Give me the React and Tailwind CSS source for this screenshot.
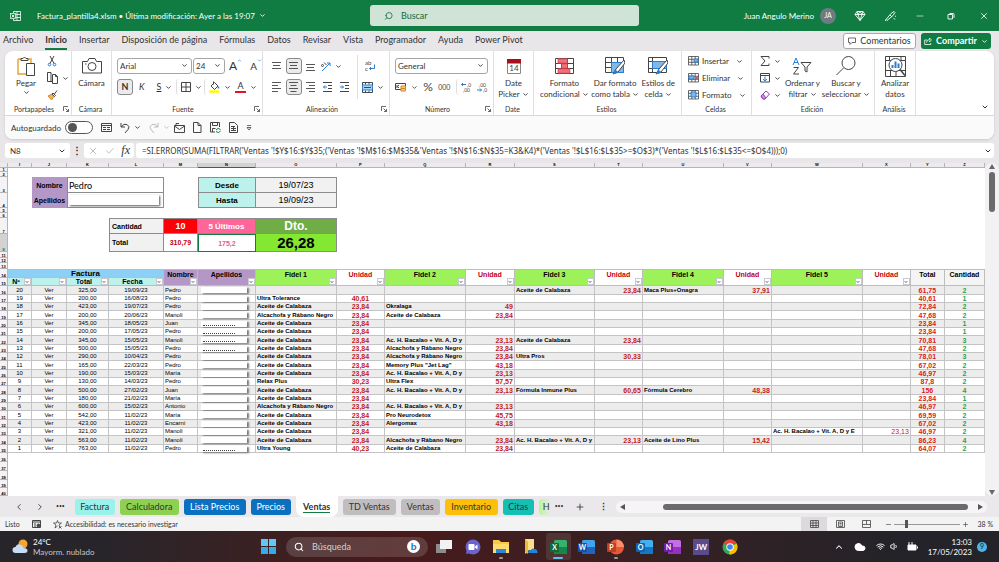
import { useState } from 'react';
import { ChevronDown, ChevronLeft, ChevronRight, ChevronUp, Cloud, Minus, Plus, Search, Volume1, Wifi, X, Check } from 'lucide-react';

const COLS = [
  ['', 8], ['I', 24], ['J', 35], ['K', 42], ['L', 55], ['M', 34], ['N', 58], ['O', 81], ['P', 48], ['Q', 81],
  ['R', 49], ['S', 80], ['T', 48], ['U', 81], ['V', 48], ['W', 91], ['X', 48], ['Y', 34], ['Z', 40],
];
const TOTAL_WIDTH = 985;

const CAL = 'Aceite de Calabaza';
const BAC = 'Ac. H. Bacalao + Vit. A, D y';
const ALC = 'Alcachofa y Rábano Negro';

// number, total, date, name, five product/price pairs, grand total, quantity
const SALES = [
  [20, '325,00', '19/09/23', 'Pedro', [['', ''], ['', ''], [CAL, '23,84'], ['Maca Plus+Onagra', '37,91'], ['', '']], '61,75', 2],
  [19, '200,00', '16/08/23', 'Pedro', [['Ultra Tolerance', '40,61'], ['', ''], ['', ''], ['', ''], ['', '']], '40,61', 1],
  [18, '423,00', '19/07/23', 'Pedro', [[CAL, '23,84'], ['Okralaga', '49'], ['', ''], ['', ''], ['', '']], '72,84', 2],
  [17, '200,00', '20/06/23', 'Manoli', [[ALC, '23,84'], [CAL, '23,84'], ['', ''], ['', ''], ['', '']], '47,68', 2],
  [16, '345,00', '18/05/23', 'Juan', [[CAL, '23,84'], ['', ''], ['', ''], ['', ''], ['', '']], '23,84', 1],
  [15, '200,00', '17/05/23', 'Pedro', [[CAL, '23,84'], ['', ''], ['', ''], ['', ''], ['', '']], '23,84', 1],
  [14, '345,00', '15/05/23', 'Manoli', [[CAL, '23,84'], [BAC, '23,13'], [CAL, '23,84'], ['', ''], ['', '']], '70,81', 3],
  [13, '500,00', '15/05/23', 'Pedro', [[CAL, '23,84'], [ALC, '23,84'], ['', ''], ['', ''], ['', '']], '47,68', 2],
  [12, '290,00', '10/04/23', 'Pedro', [[CAL, '23,84'], [ALC, '23,84'], ['Ultra Pros', '30,33'], ['', ''], ['', '']], '78,01', 3],
  [11, '165,00', '22/03/23', 'Pedro', [[CAL, '23,84'], ['Memory Plus "Jet Lag"', '43,18'], ['', ''], ['', ''], ['', '']], '67,02', 2],
  [10, '190,00', '15/03/23', 'María', [[CAL, '23,84'], [BAC, '23,13'], ['', ''], ['', ''], ['', '']], '46,97', 2],
  [9, '130,00', '14/03/23', 'Pedro', [['Relax Plus', '30,23'], ['Ultra Flex', '57,57'], ['', ''], ['', ''], ['', '']], '87,8', 2],
  [8, '500,00', '27/02/23', 'Juan', [[CAL, '23,84'], [BAC, '23,13'], ['Fórmula Inmune Plus', '60,65'], ['Fórmula Cerebro', '48,38'], ['', '']], '156', 4],
  [7, '180,00', '21/02/23', 'María', [[CAL, '23,84'], ['', ''], ['', ''], ['', ''], ['', '']], '23,84', 1],
  [6, '600,00', '15/02/23', 'Antonio', [[ALC, '23,84'], [BAC, '23,13'], ['', ''], ['', ''], ['', '']], '46,97', 2],
  [5, '542,00', '11/02/23', 'María', [[CAL, '23,84'], ['Pro Neurodetox', '45,75'], ['', ''], ['', ''], ['', '']], '69,59', 2],
  [4, '423,00', '11/02/23', 'Encarni', [[CAL, '23,84'], ['Alergomax', '43,18'], ['', ''], ['', ''], ['', '']], '67,02', 2],
  [3, '321,00', '11/02/23', 'Manoli', [[CAL, '23,84'], ['', ''], ['', ''], ['', ''], ['Ac. H. Bacalao + Vit. A, D y E', '23,13']], '46,97', 2],
  [2, '563,00', '11/02/23', 'Manoli', [[CAL, '23,84'], [ALC, '23,84'], [BAC, '23,13'], ['Aceite de Lino Plus', '15,42'], ['', '']], '86,23', 4],
  [1, '763,00', '11/02/23', 'Pedro', [['Ultra Young', '40,23'], [CAL, '23,84'], ['', ''], ['', ''], ['', '']], '64,07', 2],
];

// rows where a line of the covered surname still shows
const SHOWS_SURNAME = [16, 15, 14, 13, 1];

const TABS = [
  ['Factura', 'w-10 bg-[#99f3ea]'],
  ['Calculadora', 'w-[59px] bg-[#8ed152]'],
  ['Lista Precios', 'w-[62px] bg-[#0c70c0] text-white'],
  ['Precios', 'w-10 bg-[#0c70c0] text-white'],
  ['Ventas', ''],
  ['TD Ventas', 'w-[53px] bg-[#bfbdbf]'],
  ['Ventas', 'w-[39px] bg-[#bfbdbf]'],
  ['Inventario', 'w-[53px] bg-[#fdbf0a]'],
  ['Citas', 'w-[31px] bg-[#15bfb4]'],
];

function Icon({ w, h, children, className = '' }) {
  return (
    <svg width={w} height={h} viewBox={`0 0 ${w} ${h}`} fill="none" stroke="#444" strokeWidth="1" className={`shrink-0 ${className}`} aria-hidden="true">
      {children}
    </svg>
  );
}

const Down = ({ className = '' }) => <ChevronDown className={`size-[7px] shrink-0 ${className}`} strokeWidth={3} />;

function IconButton({ label, active, drop, className = '', children }) {
  return (
    <button
      aria-label={label}
      className={`flex h-4 items-center justify-center gap-1 rounded-[3px] ${active ? 'w-4 border border-[#8a8a8a] bg-[#ebebeb]' : ''} ${className}`}
    >
      {children}
      {drop && <Down />}
    </button>
  );
}

function Group({ label, launcher, className = '', children }) {
  return (
    <section aria-label={label} className={`flex shrink-0 flex-col border-r border-[#e1dfe1] ${className}`}>
      <div className="flex flex-1">{children}</div>
      <div className="flex h-3 items-center pr-0.5 text-[7px] leading-3">
        <span className="flex-1 text-center">{label}</span>
        {launcher && (
          <button aria-label={`Opciones de ${label}`}>
            <Icon w={6} h={6}><path d="M.5 5V.5H5M2.500 2.500l3 3M5.500 3v2.500H3" strokeWidth=".8" /></Icon>
          </button>
        )}
      </div>
    </section>
  );
}

function BigButton({ icon, lines, drop, className = '' }) {
  return (
    <button className={`flex flex-col items-center text-[8px] leading-[11px] ${className}`}>
      <span className="flex h-6 items-center justify-center">{icon}</span>
      {lines.map((line, i) => (
        <span key={line} className="flex items-center gap-0.5 whitespace-nowrap">
          {line}
          {drop && i === lines.length - 1 && <Down />}
        </span>
      ))}
    </button>
  );
}

function Dropdown({ label, value, className = '' }) {
  return (
    <div className={`relative ${className}`}>
      <select aria-label={label} className="block h-4 w-full appearance-none rounded-[3px] border border-[#a5a5a5] bg-white pl-0.5 text-[8px] leading-3">
        <option>{value}</option>
      </select>
      <Down className="pointer-events-none absolute right-1 top-1" />
    </div>
  );
}

const Lines = ({ d }) => <Icon w={10} h={10}><path d={d} strokeWidth=".9" /></Icon>;

function TitleBar() {
  return (
    <header className="flex h-[31px] items-center bg-[#107c41] text-[8px] text-white">
      <div className="flex flex-1 items-center gap-4 pl-2.5">
        <Icon w={11} h={12}>
          <g stroke="#fff">
            <path d="M3.500 3V1.500H10.500V10.500H3.500V9M7 1.500V10.500M3.500 4.500H10.500M3.500 7.500H10.500" strokeWidth=".8" />
            <rect x=".5" y="3.500" width="5" height="5" fill="#107c41" strokeWidth=".7" />
            <path d="M1.800 4.600l2.400 2.800M4.200 4.600L1.800 7.400" strokeWidth=".9" />
          </g>
        </Icon>
        <button className="flex items-center gap-1 whitespace-nowrap">
          Factura_plantilla4.xlsm • Última modificación: Ayer a las 19:07
          <Down />
        </button>
      </div>
      <label className="flex h-[21px] w-[27%] items-center gap-2 rounded-[3px] bg-[#cfe3d7] px-3.5 text-[#176b3c]">
        <Search className="size-2.5 -scale-x-100" strokeWidth={2} />
        <input type="search" aria-label="Buscar" placeholder="Buscar" className="w-full bg-transparent text-[9px] outline-none placeholder:text-[#176b3c]" />
      </label>
      <div className="flex flex-1 items-center justify-end">
        <span>Juan Angulo Merino</span>
        <span className="ml-1.5 flex size-4 items-center justify-center rounded-full bg-[#6e7b80] text-[7px]">JA</span>
        <button aria-label="Premium" className="ml-[18px]">
          <Icon w={12} h={12}><path d="M3 1.500h6l2 3-5 6-5-6zM1 4.500h10M4 4.500l2 6 2-6M3 1.500l1 3 2-3 2 3 1-3" stroke="#fff" strokeWidth=".9" /></Icon>
        </button>
        <button aria-label="Novedades" className="ml-[18px]">
          <Icon w={13} h={12}><path d="M2 9.500l5-6 3-2 1 1-2 3-6 5zM1 11l1.500-1.500M6 5l2 2M11 6l1 .5M9.500 8l1.500 1.500" stroke="#fff" strokeWidth=".9" /></Icon>
        </button>
        <button aria-label="Minimizar" className="ml-[18px]"><Minus className="size-2.5" strokeWidth={1.500} /></button>
        <button aria-label="Restaurar" className="ml-[22px]">
          <Icon w={8} h={8}><path d="M2.500 1.500h3.500q1 0 1 1V6M1 2.500h4.500V7H1z" stroke="#fff" strokeWidth=".9" /></Icon>
        </button>
        <button aria-label="Cerrar" className="ml-6 mr-2.5"><X className="size-2.5" strokeWidth={2} /></button>
      </div>
    </header>
  );
}

function MenuBar() {
  const menus = ['Archivo', 'Inicio', 'Insertar', 'Disposición de página', 'Fórmulas', 'Datos', 'Revisar', 'Vista', 'Programador', 'Ayuda', 'Power Pivot'];
  return (
    <nav className="flex h-5 items-center justify-between pl-[3px] pr-2 text-[9px]">
      <div className="flex gap-3">
        {menus.map((m) => (
          <button key={m} className={`whitespace-nowrap leading-4 ${m === 'Inicio' ? 'border-b-2 border-[#107c41] font-bold' : 'border-b-2 border-transparent'}`}>{m}</button>
        ))}
      </div>
      <div className="flex items-center gap-[5px]">
        <button className="flex h-4 w-[73px] items-center justify-center gap-1 rounded-[3px] border border-[#a9a9a9] bg-white">
          <Icon w={8} h={8}><path d="M.5 1h7v4.500H4l-2 2v-2H.5z" strokeWidth=".8" /></Icon>
          Comentarios
        </button>
        <button className="flex h-4 w-[70px] items-center justify-center gap-1 rounded-[3px] bg-[#107c41] font-bold text-white">
          <Icon w={8} h={8}><path d="M3 3H.7v4.500h6V6M2.500 5.500q.5-3 3-3V1l2 2-2 2V3.700" stroke="#fff" strokeWidth=".8" /></Icon>
          Compartir
          <Down />
        </button>
      </div>
    </nav>
  );
}

function Clipboard() {
  return (
    <Group label="Portapapeles" launcher className="w-[67px]">
      <button className="flex w-[42px] flex-col items-center pt-[5px] text-[8px] leading-[11px]">
        <Icon w={18} h={22}>
          <path d="M1 3h13v4M1 3v15h8" stroke="#e8a33d" strokeWidth="1.500" />
          <path d="M4 4.500V2.500h2q1.500-3 3 0h2v2z" fill="#fff" />
          <path d="M9.500 7.500h8v12h-8z" fill="#fff" />
        </Icon>
        <span>Pegar</span>
        <Down />
      </button>
      <div className="flex flex-col items-start gap-px pt-0.5">
        <IconButton label="Cortar">
          <Icon w={10} h={12}><path d="M3 1l4 7.500M7 1L3 8.500" /><circle cx="2.500" cy="9.500" r="1.300" stroke="#2b7cd3" /><circle cx="7.500" cy="9.500" r="1.300" stroke="#2b7cd3" /></Icon>
        </IconButton>
        <IconButton label="Copiar" drop>
          <Icon w={11} h={12}><path d="M5 9.500H.5v-9H4v9M5.500 2.500h3l2 2v7h-5zM8.500 2.500v2h2" /></Icon>
        </IconButton>
        <IconButton label="Copiar formato">
          <Icon w={11} h={12}><path d="M1 7l4-2 2 2.500L4.500 11z" fill="#f2b35b" stroke="#d68a20" /><path d="M5 5l2.500 2.500 1-1L6 4zM7.500 5L10 1.500" /></Icon>
        </IconButton>
      </div>
    </Group>
  );
}

function FontGroup() {
  return (
    <Group label="Fuente" launcher className="w-[151px]">
      <div className="flex flex-col gap-[5px] px-[5px] pt-[7px]">
        <div className="flex items-center">
          <Dropdown label="Fuente" value="Arial" className="w-[75px]" />
          <Dropdown label="Tamaño" value="24" className="ml-px w-8" />
          <button aria-label="Aumentar tamaño" className="ml-1 flex text-[12px] leading-4">A<ChevronUp className="size-[5px] text-[#2b7cd3]" strokeWidth={3} /></button>
          <button aria-label="Reducir tamaño" className="ml-2 flex text-[10px] leading-4">A<ChevronDown className="size-[5px] text-[#2b7cd3]" strokeWidth={3} /></button>
        </div>
        <div className="flex items-center text-[9px]">
          <IconButton label="Negrita" active><b>N</b></IconButton>
          <IconButton label="Cursiva" className="ml-1.5"><i>K</i></IconButton>
          <IconButton label="Subrayado" drop className="ml-3"><u>S</u></IconButton>
          <IconButton label="Bordes" drop className="ml-1 border-l border-[#e1dfe1] pl-1">
            <Icon w={10} h={10}><path d="M.5.5h9v9h-9zM5 .5v9M.5 5h9" /></Icon>
          </IconButton>
          <IconButton label="Color de relleno" drop className="ml-0.5 border-l border-[#e1dfe1] pl-1">
            <Icon w={11} h={12}><path d="M2 5l3.500-3.500L9 5 5.500 8.500zM4.500.5v3" /><path d="M9.500 5.500v2" stroke="#2b7cd3" strokeWidth="1.500" /><path d="M0 10.500h10" stroke="#ff0" strokeWidth="2.500" /></Icon>
          </IconButton>
          <IconButton label="Color de fuente" drop className="ml-1">
            <span className="border-b-2 border-[#e81123] px-0.5 leading-[10px]">A</span>
          </IconButton>
        </div>
      </div>
    </Group>
  );
}

function AlignGroup() {
  return (
    <Group label="Alineación" launcher className="w-[127px]">
      <div className="flex flex-col gap-[5px] pl-1.5 pt-[7px]">
        <div className="flex items-center gap-px">
          <IconButton label="Alinear arriba" className="w-4"><Lines d="M0 1.500h9M1 4.500h7M0 7.500h9" /></IconButton>
          <IconButton label="Alinear en el medio" active><Lines d="M0 1.500h9M1 4.500h7M0 7.500h9" /></IconButton>
          <IconButton label="Alinear abajo" className="w-4"><Lines d="M0 3.500h9M1 6.500h7M0 9.500h9" /></IconButton>
          <IconButton label="Orientación" drop>
            <Icon w={11} h={11}><path d="M2 10l8-8M10 5V2H7" stroke="#2b7cd3" /><path d="M1.500 4.500a1 1 0 102 0 1 1 0 10-2 0M4 1.500l2.500 2.500" /></Icon>
          </IconButton>
        </div>
        <div className="flex items-center gap-px">
          <IconButton label="Alinear a la izquierda" className="w-4"><Lines d="M0 .5h9M0 3.500h6M0 6.500h9M0 9.500h6" /></IconButton>
          <IconButton label="Centrar" active><Lines d="M0 .5h9M1.500 3.500h6M0 6.500h9M1.500 9.500h6" /></IconButton>
          <IconButton label="Alinear a la derecha" className="w-4"><Lines d="M0 .5h9M3 3.500h6M0 6.500h9M3 9.500h6" /></IconButton>
          <IconButton label="Disminuir sangría" className="w-4"><Icon w={10} h={10}><path d="M0 .5h9M5 3.500h4M5 6.500h4M0 9.500h9" /><path d="M4 5H.5M2 3.500L.5 5 2 6.500" stroke="#2b7cd3" /></Icon></IconButton>
          <IconButton label="Aumentar sangría" className="w-4"><Icon w={10} h={10}><path d="M0 .5h9M5 3.500h4M5 6.500h4M0 9.500h9" /><path d="M0 5h3.500M2 3.500L3.500 5 2 6.500" stroke="#2b7cd3" /></Icon></IconButton>
        </div>
      </div>
      <div className="my-1 ml-1 flex flex-col items-start gap-[5px] border-l border-[#e1dfe1] pl-1 pt-[3px]">
        <IconButton label="Ajustar texto" className="w-4">
          <Icon w={11} h={12}>
            <text x="0" y="5" fontSize="6" fill="#444" stroke="none">ab</text>
            <text x="0" y="11" fontSize="6" fill="#444" stroke="none">c</text>
            <path d="M9.500 4.500v4H4.500M6 7L4.500 8.500 6 10" stroke="#2b7cd3" />
          </Icon>
        </IconButton>
        <IconButton label="Combinar y centrar" drop>
          <Icon w={11} h={11}><path d="M.5.5h10v10H.5zM3.500.5v2M7 .5v2M3.500 8.500v2M7 8.500v2" /><path d="M.5 3h10v5H.5z" fill="#a8d4f5" stroke="#2b7cd3" /><path d="M2 5.500h7" /></Icon>
        </IconButton>
      </div>
    </Group>
  );
}

function NumberGroup() {
  return (
    <Group label="Número" launcher className="w-[104px]">
      <div className="flex flex-1 flex-col gap-[5px] px-[5px] pt-[7px]">
        <Dropdown label="Formato de número" value="General" />
        <div className="flex items-center justify-between text-[#444]">
          <IconButton label="Moneda" drop>
            <Icon w={12} h={10}><path d="M.5 1.500h10v6H.5z" /><path d="M2 3v3M4 3L2.500 4.500 4 6" /><path d="M6 4h4.500v5H6zM6 6.500h4.500" fill="#f7c68c" stroke="#d68a20" /></Icon>
          </IconButton>
          <button aria-label="Porcentaje" className="text-[12px] leading-4">%</button>
          <button aria-label="Millares" className="text-[7px] leading-4">000</button>
          <IconButton label="Aumentar decimales" className="border-l border-[#e1dfe1] pl-1">
            <Icon w={11} h={11}>
              <text x="6" y="5" fontSize="5" fill="#444" stroke="none">,0</text>
              <text x="2" y="10" fontSize="5" fill="#444" stroke="none">,00</text>
              <path d="M5 2.500H.5M2 1L.5 2.500 2 4" stroke="#2b7cd3" />
            </Icon>
          </IconButton>
          <IconButton label="Disminuir decimales">
            <Icon w={11} h={11}>
              <text x="2" y="5" fontSize="5" fill="#444" stroke="none">,00</text>
              <text x="6" y="10" fontSize="5" fill="#444" stroke="none">,0</text>
              <path d="M0 8h4.500M3 6.500L4.500 8 3 9.500" stroke="#2b7cd3" />
            </Icon>
          </IconButton>
        </div>
      </div>
    </Group>
  );
}

function StylesGroup() {
  return (
    <Group label="Estilos" className="w-[148px]">
      <div className="flex flex-1 justify-between px-1.5 pt-[3px]">
        <BigButton lines={['Formato', 'condicional']} drop icon={
          <Icon w={19} h={16}>
            <path d="M.5.5h18v15H.5zM6.500.5v15M12.500.5v15M.5 5.500h18M.5 10.500h18" />
            <path d="M3 .8h9.500v4.400H3zM6.500 5.800h6v4.400h-6zM3 10.800h12v4.400H3z" fill="#f1707b" stroke="#d13438" strokeWidth=".6" />
          </Icon>
        } />
        <BigButton lines={['Dar formato', 'como tabla']} drop icon={
          <Icon w={20} h={18}>
            <path d="M.5.5h18v15H.5zM6.500.5v15M12.500.5v15M.5 5.500h18M.5 10.500h18" />
            <path d="M6.500 5.500h12v10h-12z" fill="#7fb9ea" stroke="#2b7cd3" />
            <path d="M19 3l-8 9-3 5 5-2 7-9z" fill="#fff" />
            <path d="M8 17q1-4 3-4l2 2q-1 2-5 2z" fill="#2b7cd3" stroke="none" />
          </Icon>
        } />
        <BigButton lines={['Estilos de', 'celda']} drop icon={
          <Icon w={20} h={18}>
            <path d="M.5.5h18v15H.5zM4.500.5v15M.5 4.500h18M.5 11.500h18" />
            <path d="M4.500 4.500h14v7h-14z" fill="#7fb9ea" stroke="#2b7cd3" />
            <path d="M19 3l-8 9-3 5 5-2 7-9z" fill="#fff" />
            <path d="M8 17q1-4 3-4l2 2q-1 2-5 2z" fill="#2b7cd3" stroke="none" />
          </Icon>
        } />
      </div>
    </Group>
  );
}

function CellsGroup() {
  const rows = [
    ['Insertar', 'M6 3h4v3H6z', null],
    ['Eliminar', 'M1 3h5v3H1z', 'M7 3l3.500 4M10.500 3L7 7'],
    ['Formato', 'M3 2h5v5H3z', null],
  ];
  return (
    <Group label="Celdas" className="w-[70px]">
      <div className="flex flex-col gap-px pl-1.5 pt-0.5">
        {rows.map(([name, blue, red]) => (
          <button key={name} className="flex h-4 items-center gap-[3px] text-[8px]">
            <Icon w={11} h={10}>
              <path d="M.5 .5h10v8.500H.5zM.5 3.300h10M.5 6.300h10M3.800 .5v8.500M7.200 .5v8.500" strokeWidth=".8" />
              <path d={blue} fill="#7fb9ea" stroke="#2b7cd3" />
              {red && <path d={red} stroke="#d13438" />}
            </Icon>
            {name}
            <Down className="ml-1" />
          </button>
        ))}
      </div>
    </Group>
  );
}

function EditGroup() {
  return (
    <Group label="Edición" className="w-[123px]">
      <div className="flex flex-col gap-px pl-2 pt-0.5">
        <IconButton label="Autosuma" drop><Icon w={10} h={10}><path d="M9 2.500V.5H1L5 5 1 9.500h8v-2" /></Icon></IconButton>
        <IconButton label="Rellenar" drop><Icon w={10} h={10}><path d="M.5.5h9v8.500h-9zM.5 2.500h9" /><path d="M5 3.500V8M3 6l2 2 2-2" stroke="#2b7cd3" /></Icon></IconButton>
        <IconButton label="Borrar" drop><Icon w={10} h={10}><path d="M1 6l5-5 3.500 3L5 9H3z" stroke="#9b3fb5" /><path d="M1 6l2 3h2l1-1-3-4z" fill="#cf8fe0" stroke="#9b3fb5" /></Icon></IconButton>
      </div>
      <div className="flex flex-1 justify-between px-1 pt-[3px]">
        <BigButton lines={['Ordenar y', 'filtrar']} drop icon={
          <Icon w={20} h={18}>
            <path d="M1 8l3-7 3 7M2 5.500h4" stroke="#2b7cd3" />
            <path d="M1.500 10.500h5l-5 6.500h5.500M9 5.500h10l-4 4.500v5l-2-1v-4z" />
          </Icon>
        } />
        <BigButton lines={['Buscar y', 'seleccionar']} drop icon={
          <Icon w={20} h={20}><circle cx="12.500" cy="7" r="6.500" /><path d="M7.500 12L.5 19" /></Icon>
        } />
      </div>
    </Group>
  );
}

function QuickAccess() {
  const [autosave, setAutosave] = useState(false);
  return (
    <div className="flex h-6 items-center border-t border-[#d9d7d9] bg-[#fafafa] pl-1.5 text-[8px]">
      <label className="flex items-center gap-1">
        Autoguardado
        <input
          type="checkbox"
          checked={autosave}
          onChange={(e) => setAutosave(e.target.checked)}
          className="flex h-[13px] w-7 appearance-none items-center rounded-full border border-[#555] bg-white px-0.5 before:size-[9px] before:rounded-full before:bg-[#555] before:content-[''] checked:justify-end"
        />
      </label>
      <div className="ml-2 flex items-center gap-2">
        <IconButton label="Formulario"><Icon w={11} h={9}><path d="M.5.5h10v8H.5zM.5 2.500h10M2 4.500h3M6 4.500h3M2 6.500h3M6 6.500h3" /></Icon></IconButton>
        <IconButton label="Deshacer" drop><Icon w={10} h={12}><path d="M1 1v4h4M1 5q3-4 6-2.500 3.500 2 1 5L5 11" /></Icon></IconButton>
        <IconButton label="Rehacer" drop className="text-[#bbb]"><Icon w={10} h={12}><path d="M9 1v4H5M9 5Q6 1 3 2.500q-3.500 2-1 5L5 11" stroke="#bbb" /></Icon></IconButton>
        <IconButton label="Correo" className="-ml-1"><Icon w={11} h={10}><path d="M.5 2.500h10v7H.5zM.5 3l5 3.500 5-3.500M2 2V.5h3" /></Icon></IconButton>
        <IconButton label="Nuevo"><Icon w={9} h={11}><path d="M.5.5h4.500l3 3v7H.5zM5 .5v3h3" /></Icon></IconButton>
        <IconButton label="Guardar"><Icon w={11} h={11}><path d="M5 10H.5V.5h9V5M2.500.5v3h5v-3M2.500 10V6.500h3" /><path d="M6 8q2-3 4.500-.5M10.500 9q-2 3-4.500.5" stroke="#107c41" /></Icon></IconButton>
        <IconButton label="Vista previa"><Icon w={9} h={11}><path d="M.5.5h5l3 3v7H.5zM2 4.500h4M2 6.500h5M2 8.500h5M4.500 4v5" /></Icon></IconButton>
        <IconButton label="Personalizar"><Icon w={6} h={6}><path d="M1 .5h4M1 2.500h4L3 5z" strokeWidth=".8" /></Icon></IconButton>
      </div>
    </div>
  );
}

function Ribbon() {
  return (
    <div className="mx-[5px] overflow-hidden rounded-lg bg-white shadow-sm">
      <div className="flex h-16">
        <Clipboard />
        <Group label="Cámara" className="w-10">
          <BigButton className="flex-1 pt-[3px]" lines={['Cámara']} icon={
            <Icon w={20} h={16}><path d="M.5 3.500h5l1.500-3h6l1.500 3h5v11.500H.5z" /><circle cx="10" cy="8.500" r="4" /><path d="M3 6h1.500" /></Icon>
          } />
        </Group>
        <FontGroup />
        <AlignGroup />
        <NumberGroup />
        <Group label="Date" className="w-10">
          <BigButton className="flex-1 pt-[3px]" lines={['Date', 'Picker']} drop icon={
            <Icon w={14} h={15}>
              <path d="M.5.5h13v14H.5z" fill="#fff" stroke="#888" />
              <path d="M0 0h14v4.500H0z" fill="#a80f1c" stroke="none" />
              <text x="7" y="12" fontSize="8" textAnchor="middle" fill="#444" stroke="none">14</text>
            </Icon>
          } />
        </Group>
        <StylesGroup />
        <CellsGroup />
        <EditGroup />
        <Group label="Análisis" className="w-[41px]">
          <BigButton className="flex-1 pt-[3px]" lines={['Analizar', 'datos']} icon={
            <Icon w={21} h={21}>
              <path d="M.5.5h20v20H.5zM.5 4.500h20M.5 14.500h20M5.500 14.500v6M11 14.500v6M4.500 .5v4M16 .5v4" />
              <circle cx="10.500" cy="9" r="6.500" fill="#fff" stroke="#444" />
              <path d="M7.500 12V9M10.500 12V5.500M13.500 12V7.500" stroke="#2b7cd3" strokeWidth="2" />
              <path d="M15 13.500l5 6" strokeWidth="1.500" />
            </Icon>
          } />
        </Group>
        <div className="flex flex-1 items-end justify-end pb-1 pr-[5px]">
          <button aria-label="Contraer cinta"><ChevronDown className="size-2" strokeWidth={3} /></button>
        </div>
      </div>
      <QuickAccess />
    </div>
  );
}

function FormulaBar() {
  return (
    <div className="flex h-[15px] items-stretch pl-[5px] pr-[5px] text-[8px]">
      <div className="relative w-[65px]">
        <input aria-label="Cuadro de nombres" defaultValue="N8" className="h-full w-full rounded-[3px] bg-white pl-[5px]" />
        <ChevronDown className="absolute right-1 top-1 size-2" strokeWidth={3} />
      </div>
      <span className="w-3.5 text-center text-[10px] font-bold leading-[15px]">⋮</span>
      <div className="flex w-[50px] items-center justify-between rounded-[3px] bg-white px-1">
        <button aria-label="Cancelar"><X className="size-2.5 text-[#b0b0b0]" strokeWidth={2} /></button>
        <button aria-label="Introducir"><Check className="size-2.5 text-[#b0b0b0]" strokeWidth={2} /></button>
        <button aria-label="Insertar función" className="font-['Liberation_Serif',serif] text-[12px] italic leading-[15px]">fx</button>
      </div>
      <div className="relative ml-0.5 flex-1">
        <input
          aria-label="Fórmula"
          className="h-full w-full rounded-[3px] bg-white pl-1.5 font-['Noto_Sans',sans-serif]"
          defaultValue="=SI.ERROR(SUMA(FILTRAR('Ventas '!$Y$16:$Y$35;('Ventas '!$M$16:$M$35&'Ventas '!$N$16:$N$35=K3&K4)*('Ventas '!$L$16:$L$35>=$O$3)*('Ventas '!$L$16:$L$35<=$O$4)));0)"
        />
        <ChevronDown className="absolute right-0.5 top-1 size-2" strokeWidth={3} />
      </div>
    </div>
  );
}

const RowNumber = ({ n, active }) => (
  <th scope="row" className={`border-b border-r border-[#b5b5b5] align-bottom text-[4px] leading-[3px] ${active ? 'bg-[#d2d2d2] text-[#107c41]' : 'bg-[#f4f2f4]'}`}>{n}</th>
);

const Filter = () => (
  <button aria-label="Filtrar" className="flex size-[7px] shrink-0 items-center justify-center border border-[#c9c9d2] bg-white">
    <ChevronDown className="size-1" strokeWidth={4} />
  </button>
);

function HeaderCell({ label = '', className }) {
  return (
    <td className={`border-b border-r border-[#bdbdbd] ${className}`}>
      <div className="flex h-[7px] items-center">
        <span className="flex-1 text-center">{label}</span>
        <Filter />
      </div>
    </td>
  );
}

function SummaryRows() {
  const box = 'border-b border-r border-[#8c8c8c] text-center';
  return (
    <>
      <tr className="h-1"><RowNumber n="1" /></tr>
      <tr className="h-[5px]"><RowNumber n="2" /></tr>
      <tr className="h-4">
        <RowNumber n="3" />
        <td />
        <td className="bg-[#b497c7] text-center text-[7px] font-bold">Nombre</td>
        <td colSpan={2} className={`${box} border-l border-t pl-px text-left! font-[Lato,sans-serif] text-[9px]`}>Pedro</td>
        <td />
        <td className={`${box} border-l border-t bg-[#bdf2ec] text-[8px] font-bold`}>Desde</td>
        <td className={`${box} border-t bg-[#f1f1f1] text-[9px]`}>19/07/23</td>
      </tr>
      <tr className="h-[15px]">
        <RowNumber n="4" />
        <td />
        <td className="bg-[#b497c7] text-center text-[7px] font-bold">Apellidos</td>
        <td colSpan={2} className={`${box} border-l`}><div className="ml-px mr-1 h-2.5 bg-white shadow-[1px_1px_2px_#555]" /></td>
        <td />
        <td className={`${box} border-l bg-[#bdf2ec] text-[8px] font-bold`}>Hasta</td>
        <td className={`${box} bg-[#f1f1f1] text-[9px]`}>19/09/23</td>
      </tr>
      <tr className="h-[5px]"><RowNumber n="5" /></tr>
      <tr className="h-[5px]"><RowNumber n="6" /></tr>
      <tr className="h-4">
        <RowNumber n="7" />
        <td colSpan={3} />
        <td className={`${box} border-l border-t bg-[#f1f1f1] pl-0.5 text-left! text-[7px] font-bold`}>Cantidad</td>
        <td className={`${box} border-t bg-[#fb0007] text-[9px] font-bold text-white`}>10</td>
        <td className={`${box} border-t bg-[#ff6599] text-[8px] font-bold text-white`}>5 Últimos</td>
        <td className={`${box} border-t bg-[#70ad47] text-[12px] font-bold text-white`}>Dto.</td>
      </tr>
      <tr className="h-[18px]">
        <RowNumber n="8" active />
        <td colSpan={3} />
        <td className={`${box} border-l bg-[#f1f1f1] pl-0.5 text-left! text-[7px] font-bold`}>Total</td>
        <td className={`${box} text-[7px] font-bold text-[#c00010]`}>310,79</td>
        <td className="border border-[#107c41] text-center text-[7px] font-bold text-[#e0609a]">175,2</td>
        <td className={`${box} bg-[#84e831] text-[15px] font-black`}>26,28</td>
      </tr>
      <tr className="h-1.5"><RowNumber n="11" /></tr>
      <tr className="h-[5px]"><RowNumber n="12" /></tr>
      <tr className="h-1.5"><RowNumber n="13" /></tr>
    </>
  );
}

function HeaderRows() {
  const top = 'border-r border-t border-[#bdbdbd] text-center font-bold';
  const products = [1, 2, 3, 4, 5];
  return (
    <>
      <tr className="h-[9px] text-[7px]">
        <RowNumber n="14" />
        <td colSpan={4} className={`${top} border-b bg-[#8dd0f5] text-[8px]`}>Factura</td>
        <td className={`${top} bg-[#b497c7]`}>Nombre</td>
        <td className={`${top} bg-[#b497c7]`}>Apellidos</td>
        {products.flatMap((n) => [
          <td key={`f${n}`} className={`${top} bg-[#9df25a]`}>Fidel {n}</td>,
          <td key={`u${n}`} className={`${top} text-[#c00010]`}>Unidad</td>,
        ])}
        <td className={`${top} bg-[#f4f4f4]`}>Total</td>
        <td className={`${top} bg-[#f4f4f4]`}>Cantidad</td>
      </tr>
      <tr className="h-2 text-[7px] font-bold">
        <RowNumber n="15" />
        <HeaderCell label="Nº" className="bg-[#bdf2ec]" />
        <HeaderCell className="bg-[#bdf2ec]" />
        <HeaderCell label="Total" className="bg-[#bdf2ec]" />
        <HeaderCell label="Fecha" className="bg-[#bdf2ec]" />
        <HeaderCell className="bg-[#b497c7]" />
        <HeaderCell className="bg-[#b497c7]" />
        {products.flatMap((n) => [
          <HeaderCell key={`f${n}`} className="bg-[#9df25a]" />,
          <HeaderCell key={`u${n}`} className="" />,
        ])}
        <td className="border-b border-r border-[#bdbdbd] bg-[#f4f4f4]" />
        <td className="border-b border-r border-[#bdbdbd] bg-[#f4f4f4]" />
      </tr>
    </>
  );
}

function SaleRow({ sale, index }) {
  const [number, amount, date, name, items, total, count] = sale;
  const cell = 'whitespace-nowrap border-b border-r border-[#c4c4c4]';
  return (
    <tr className={`${index % 3 === 0 ? 'h-[9px]' : 'h-2'} ${index % 2 === 0 ? 'bg-[#ececec]' : 'bg-white'}`}>
      <RowNumber n={index + 16} />
      <td className={`${cell} text-center`}>{number}</td>
      <td className={`${cell} text-center`}><a href="#ver">Ver</a></td>
      <td className={`${cell} text-center`}>{amount}</td>
      <td className={`${cell} text-center`}>{date}</td>
      <td className={`${cell} pl-px`}>{name}</td>
      <td className={`${cell} pl-[3px] pr-2`}>
        <div className="h-1.5 bg-white pt-1 shadow-[2px_1px_2px_#777]">
          {SHOWS_SURNAME.includes(number) && <div className="ml-0.5 w-8 border-b border-dotted border-[#444]" />}
        </div>
      </td>
      {items.map(([product, price], i) => [
        <td key={`p${i}`} className={`${cell} pl-px font-bold`}>{product}</td>,
        <td key={`u${i}`} className={`${cell} text-[7px] text-[#c41a22] ${i === 0 ? 'text-center' : 'pr-px text-right'} ${i === 4 ? '' : 'font-bold'}`}>{price}</td>,
      ])}
      <td className={`${cell} text-center text-[7px] font-bold text-[#e01820]`}>{total}</td>
      <td className={`${cell} text-center text-[7px] font-bold text-[#1aa650]`}>{count}</td>
    </tr>
  );
}

function Sheet() {
  return (
    <div className="mt-[5px] flex">
      <div className="min-w-0 flex-1 bg-white">
        <table className="w-full table-fixed border-separate border-spacing-0 font-['Liberation_Sans',Arial,sans-serif] text-[6px] leading-[7px] text-black">
          <colgroup>
            {COLS.map(([name, width]) => <col key={name} style={{ width: `${(width / TOTAL_WIDTH) * 100}%` }} />)}
          </colgroup>
          <thead>
            <tr className="h-[5px]">
              {COLS.map(([name]) => (
                <th key={name} scope="col" className={`border-b border-r border-[#b5b5b5] text-[4px] leading-1 ${name === 'N' ? 'border-b-[#107c41] bg-[#d2d2d2]' : 'bg-[#eceaec]'}`}>{name}</th>
              ))}
            </tr>
          </thead>
          <tbody>
            <SummaryRows />
            <HeaderRows />
            {SALES.map((sale, i) => <SaleRow key={sale[0]} sale={sale} index={i} />)}
            {[36, 37, 38, 39, 40].map((n) => <tr key={n} className={n < 39 ? 'h-[9px]' : 'h-2'}><RowNumber n={n} /></tr>)}
          </tbody>
        </table>
      </div>
      <div className="flex w-3.5 flex-col items-center justify-between rounded-full bg-[#f3f1f3] py-px">
        <div className="flex flex-col items-center gap-[3px]">
          <button aria-label="Subir"><Icon w={6} h={5}><path d="M3 0l3 5H0z" fill="#666" stroke="none" /></Icon></button>
          <div className="h-10 w-1.5 rounded-full bg-[#6b6b6b]" />
        </div>
        <button aria-label="Bajar"><Icon w={6} h={5}><path d="M0 0h6L3 5z" fill="#666" stroke="none" /></Icon></button>
      </div>
    </div>
  );
}

function SheetTabs() {
  return (
    <div className="flex h-[21px] items-center bg-[#ebe8eb] pl-3.5 pr-3 text-[9px]">
      <button aria-label="Hoja anterior"><ChevronLeft className="size-2.5" /></button>
      <button aria-label="Hoja siguiente" className="ml-[11px]"><ChevronRight className="size-2.5" /></button>
      <button aria-label="Más hojas" className="ml-[11px] text-[5px]">•••</button>
      <div className="ml-2.5 flex items-center gap-[5px]">
        {TABS.map(([name, style], i) => i === 4 ? (
          <button key={i} aria-current="page" className="h-[21px] w-[42px] rounded-b-lg bg-white px-1 font-bold">
            <span className="border-b border-[#107c41] leading-3">{name}</span>
          </button>
        ) : (
          <button key={i} className={`h-4 whitespace-nowrap rounded-[3px] ${style}`}>{name}</button>
        ))}
        <button className="h-4 w-3 rounded-l-[3px] bg-linear-to-r from-[#b9f59a] to-[#ebe8eb] pl-1 text-left">H</button>
      </div>
      <button aria-label="Más hojas a la derecha" className="ml-1 text-[5px]">•••</button>
      <button aria-label="Hoja nueva" className="ml-3"><Plus className="size-2.5" /></button>
      <span className="ml-3.5 font-bold">⋮</span>
      <div className="ml-2 flex h-3 flex-1 items-center gap-1 rounded-full bg-[#f6f4f6] px-1">
        <button aria-label="Desplazar a la izquierda"><Icon w={5} h={6}><path d="M5 0v6L0 3z" fill="#555" stroke="none" /></Icon></button>
        <div className="flex flex-1 justify-end"><div className="h-1.5 w-[90%] rounded-full bg-[#6b6b6b]" /></div>
        <button aria-label="Desplazar a la derecha" className="ml-1.5"><Icon w={5} h={6}><path d="M0 0v6l5-3z" fill="#555" stroke="none" /></Icon></button>
      </div>
    </div>
  );
}

function StatusBar() {
  return (
    <div className="flex h-3.5 items-center justify-between bg-[#f4f3f4] pl-[5px] pr-1.5 text-[7px]">
      <div className="flex items-center">
        <span className="w-[27px]">Listo</span>
        <Icon w={9} h={8}><path d="M.5.5h8v7h-8zM.5 2h8M2 4h2M2 6h2" /><circle cx="6.500" cy="5.500" r="1.500" fill="#444" /></Icon>
        <button className="ml-3 flex items-center gap-[3px]">
          <Icon w={9} h={9}><path d="M4.500.5l1 2.500h3L6 5l1 3M4.500.5l-1 2.500h-3L3 5 2 8l2.500-2M6 6l2.500 2.500M8.500 6L6 8.500" strokeWidth=".8" /></Icon>
          Accesibilidad: es necesario investigar
        </button>
      </div>
      <div className="flex h-full items-center">
        <button aria-label="Normal" className="flex h-full w-[26px] items-center justify-center bg-[#dcdadc]"><Icon w={9} h={8}><path d="M.5.5h8v7h-8zM3 .5v7M6 .5v7M.5 3h8M.5 5.500h8" strokeWidth=".8" /></Icon></button>
        <button aria-label="Diseño de página" className="flex w-[26px] justify-center"><Icon w={9} h={8}><path d="M.5.5h8v7h-8zM2.500 2h4v4.500h-4zM3.500 3.500h2M3.500 5h2" strokeWidth=".8" /></Icon></button>
        <button aria-label="Salto de página" className="flex w-[26px] justify-center"><Icon w={9} h={8}><path d="M.5.5h8v7h-8zM4.500.5v4h4M.5 4.500h4" strokeWidth=".8" /></Icon></button>
        <button aria-label="Alejar" className="ml-1.5"><Minus className="size-[7px]" /></button>
        <input
          type="range"
          aria-label="Zoom"
          min="0"
          max="100"
          defaultValue="16"
          className="mx-0.5 h-2 w-[66px] appearance-none bg-[linear-gradient(#999,#999)] bg-[length:100%_1px] bg-center bg-no-repeat [&::-webkit-slider-thumb]:h-2 [&::-webkit-slider-thumb]:w-[3px] [&::-webkit-slider-thumb]:appearance-none [&::-webkit-slider-thumb]:bg-[#555]"
        />
        <button aria-label="Acercar"><Plus className="size-[7px]" /></button>
        <span className="ml-2 whitespace-nowrap">38 %</span>
      </div>
    </div>
  );
}

// Office style tile: coloured page behind a lettered badge
function OfficeIcon({ letter, page, shade, badge, round }) {
  return (
    <svg width="17" height="16" viewBox="0 0 17 16" aria-hidden="true">
      {round ? <circle cx="9.500" cy="8" r="7.500" fill={page} /> : <rect x="4" y="1" width="13" height="14" rx="1.500" fill={page} />}
      {round ? <path d="M9.500 .5A7.500 7.500 0 0117 8H9.500z" fill={shade} /> : <path d="M4 8h13v5.500q0 1.500-1.500 1.500h-10Q4 15 4 13.500z" fill={shade} />}
      <rect x="0" y="4" width="9" height="9" rx="1" fill={badge} />
      <text x="4.500" y="11" fontSize="7" fontWeight="700" textAnchor="middle" fill="#fff">{letter}</text>
    </svg>
  );
}

const APPS = [
  ['Vista de tareas', <svg width="16" height="16" viewBox="0 0 16 16"><rect x="0" y="5" width="10" height="9" fill="#8d8d8d" /><rect x="4" y="1" width="12" height="9" fill="#f2f2f2" /></svg>],
  ['Chat', <svg width="16" height="16" viewBox="0 0 16 16"><circle cx="8" cy="8" r="7.500" fill="#6c63cf" /><path d="M1 15l1-5 4 4z" fill="#6c63cf" /><rect x="3.500" y="5" width="6" height="6" rx="1" fill="#fff" /><path d="M10 7.500L12.500 5.500v5L10 8.500z" fill="#fff" /></svg>],
  ['Explorador', <svg width="16" height="15" viewBox="0 0 16 15"><path d="M0 1h6l2 2h8v11H0z" fill="#f7c948" /><path d="M0 5h16v9H0z" fill="#fddc6c" /><path d="M3 10h10v4H3z" fill="#2b88d8" /></svg>],
  ['Documentos', <svg width="16" height="16" viewBox="0 0 16 16"><path d="M3 0h9v11H7l-4 4z" fill="#fbe08a" /><path d="M3 0l3 3v12l-3-2z" fill="#e8b93c" /><path d="M6 14q0-3 3-3 1-2.500 3.500-1 3 0 3 4z" fill="#1f86d8" /></svg>],
  ['Excel', <OfficeIcon letter="X" page="#33b36b" shade="#18864b" badge="#0f6b38" />],
  ['Word', <OfficeIcon letter="W" page="#41a5ee" shade="#2263bf" badge="#1a4fa8" />],
  ['PowerPoint', <OfficeIcon round letter="P" page="#e0593a" shade="#ff8f6b" badge="#c43e1c" />],
  ['Outlook', <OfficeIcon letter="O" page="#41b0f0" shade="#1478c8" badge="#0f64b4" />],
  ['OneNote', <OfficeIcon letter="N" page="#c46ee6" shade="#9332bf" badge="#7719aa" />],
  ['JW Library', <span className="flex size-4 items-center justify-center bg-[#5b4a8c] text-[8px] font-bold text-white">JW</span>],
  ['Chrome', <svg width="16" height="16" viewBox="0 0 16 16"><circle cx="8" cy="8" r="7.500" fill="#34a853" /><path d="M8 8L1.500 4.200A7.500 7.500 0 0114.500 4.200L15 5H8z" fill="#ea4335" /><path d="M8 8l6.700-3.400A7.500 7.500 0 018 15.500L7 15z" fill="#fbbc05" /><circle cx="8" cy="8" r="3.700" fill="#fff" /><circle cx="8" cy="8" r="2.800" fill="#4285f4" /></svg>],
];

function Taskbar() {
  return (
    <footer className="grid h-[31px] grid-cols-[1fr_auto_1fr] items-center bg-linear-to-r from-[#27252a] from-10% via-[#481a1b] via-40% to-[#232329] to-90% text-[8px] text-white">
      <button className="flex items-center gap-[5px] pl-3 text-left leading-[10px]">
        <Icon w={16} h={15}>
          <circle cx="11" cy="5" r="4.500" fill="#f7a531" stroke="none" />
          <path d="M3.500 14a3 3 0 010-6Q5 4 9 6q2 1 2.500 3 4 0 4 2.500 0 2.500-3 2.500z" fill="#c9dcf5" stroke="none" />
        </Icon>
        <span>24°C<br /><span className="text-[#c9c4c8]">Mayorm. nublado</span></span>
      </button>
      <div className="flex items-center pl-1.5">
        <button aria-label="Inicio" className="grid size-[15px] grid-cols-2 gap-px">
          <span className="bg-[#5fc8f5]" /><span className="bg-[#5fc8f5]" /><span className="bg-[#3aa9e8]" /><span className="bg-[#3aa9e8]" />
        </button>
        <label className="ml-2.5 flex h-5 w-[142px] items-center gap-2 rounded-full bg-white/15 px-2">
          <Search className="size-2.5 shrink-0" strokeWidth={2.500} />
          <input type="search" aria-label="Búsqueda" placeholder="Búsqueda" className="w-full min-w-0 bg-transparent text-[9px] outline-none placeholder:text-[#d8cfd0]" />
          <span className="flex size-[13px] shrink-0 items-center justify-center rounded-full bg-white text-[10px] font-black text-[#1683c9]">b</span>
        </label>
        <div className="ml-0.5 grid w-[314px] grid-cols-11 justify-items-center">
          {APPS.map(([name, icon]) => (
            <button
              key={name}
              aria-label={name}
              className={`flex h-[27px] w-[25px] flex-col items-center justify-between rounded-[3px] pb-px pt-1.5 ${name === 'Excel' ? 'bg-white/10' : ''}`}
            >
              {icon}
              {name === 'Excel' && <span className="h-0.5 w-2.5 rounded-full bg-[#5fc0f0]" />}
              {(name === 'Explorador' || name === 'PowerPoint') && <span className="h-0.5 w-1 rounded-full bg-[#a09a9c]" />}
            </button>
          ))}
        </div>
      </div>
      <div className="flex items-center justify-end pr-3">
        <button aria-label="Mostrar iconos ocultos"><ChevronUp className="size-2.5" strokeWidth={2.500} /></button>
        <Cloud className="ml-2.5 size-3" fill="#fff" />
        <Wifi className="ml-2.5 size-[9px]" strokeWidth={2.500} />
        <Volume1 className="ml-[5px] size-[9px]" strokeWidth={2.500} />
        <Icon w={11} h={9} className="ml-2"><path d="M1 3h8v5H1z" fill="#fff" stroke="#fff" /><path d="M10.500 4.500v2M2 0v3M5 0v3" stroke="#fff" /></Icon>
        <time className="ml-2.5 text-right leading-[10px]">13:03<br />17/05/2023</time>
        <span className="ml-[5px] flex size-2.5 items-center justify-center rounded-full bg-[#4cb4e8] text-[7px] text-[#123]">9</span>
      </div>
    </footer>
  );
}

export default function App() {
  return (
    <div className="flex min-h-screen flex-col bg-[#e9e6ea] font-[Lato,'Open_Sans',sans-serif] text-[#333]">
      <TitleBar />
      <MenuBar />
      <Ribbon />
      <div className="h-1" />
      <FormulaBar />
      <Sheet />
      <SheetTabs />
      <StatusBar />
      <Taskbar />
    </div>
  );
}
